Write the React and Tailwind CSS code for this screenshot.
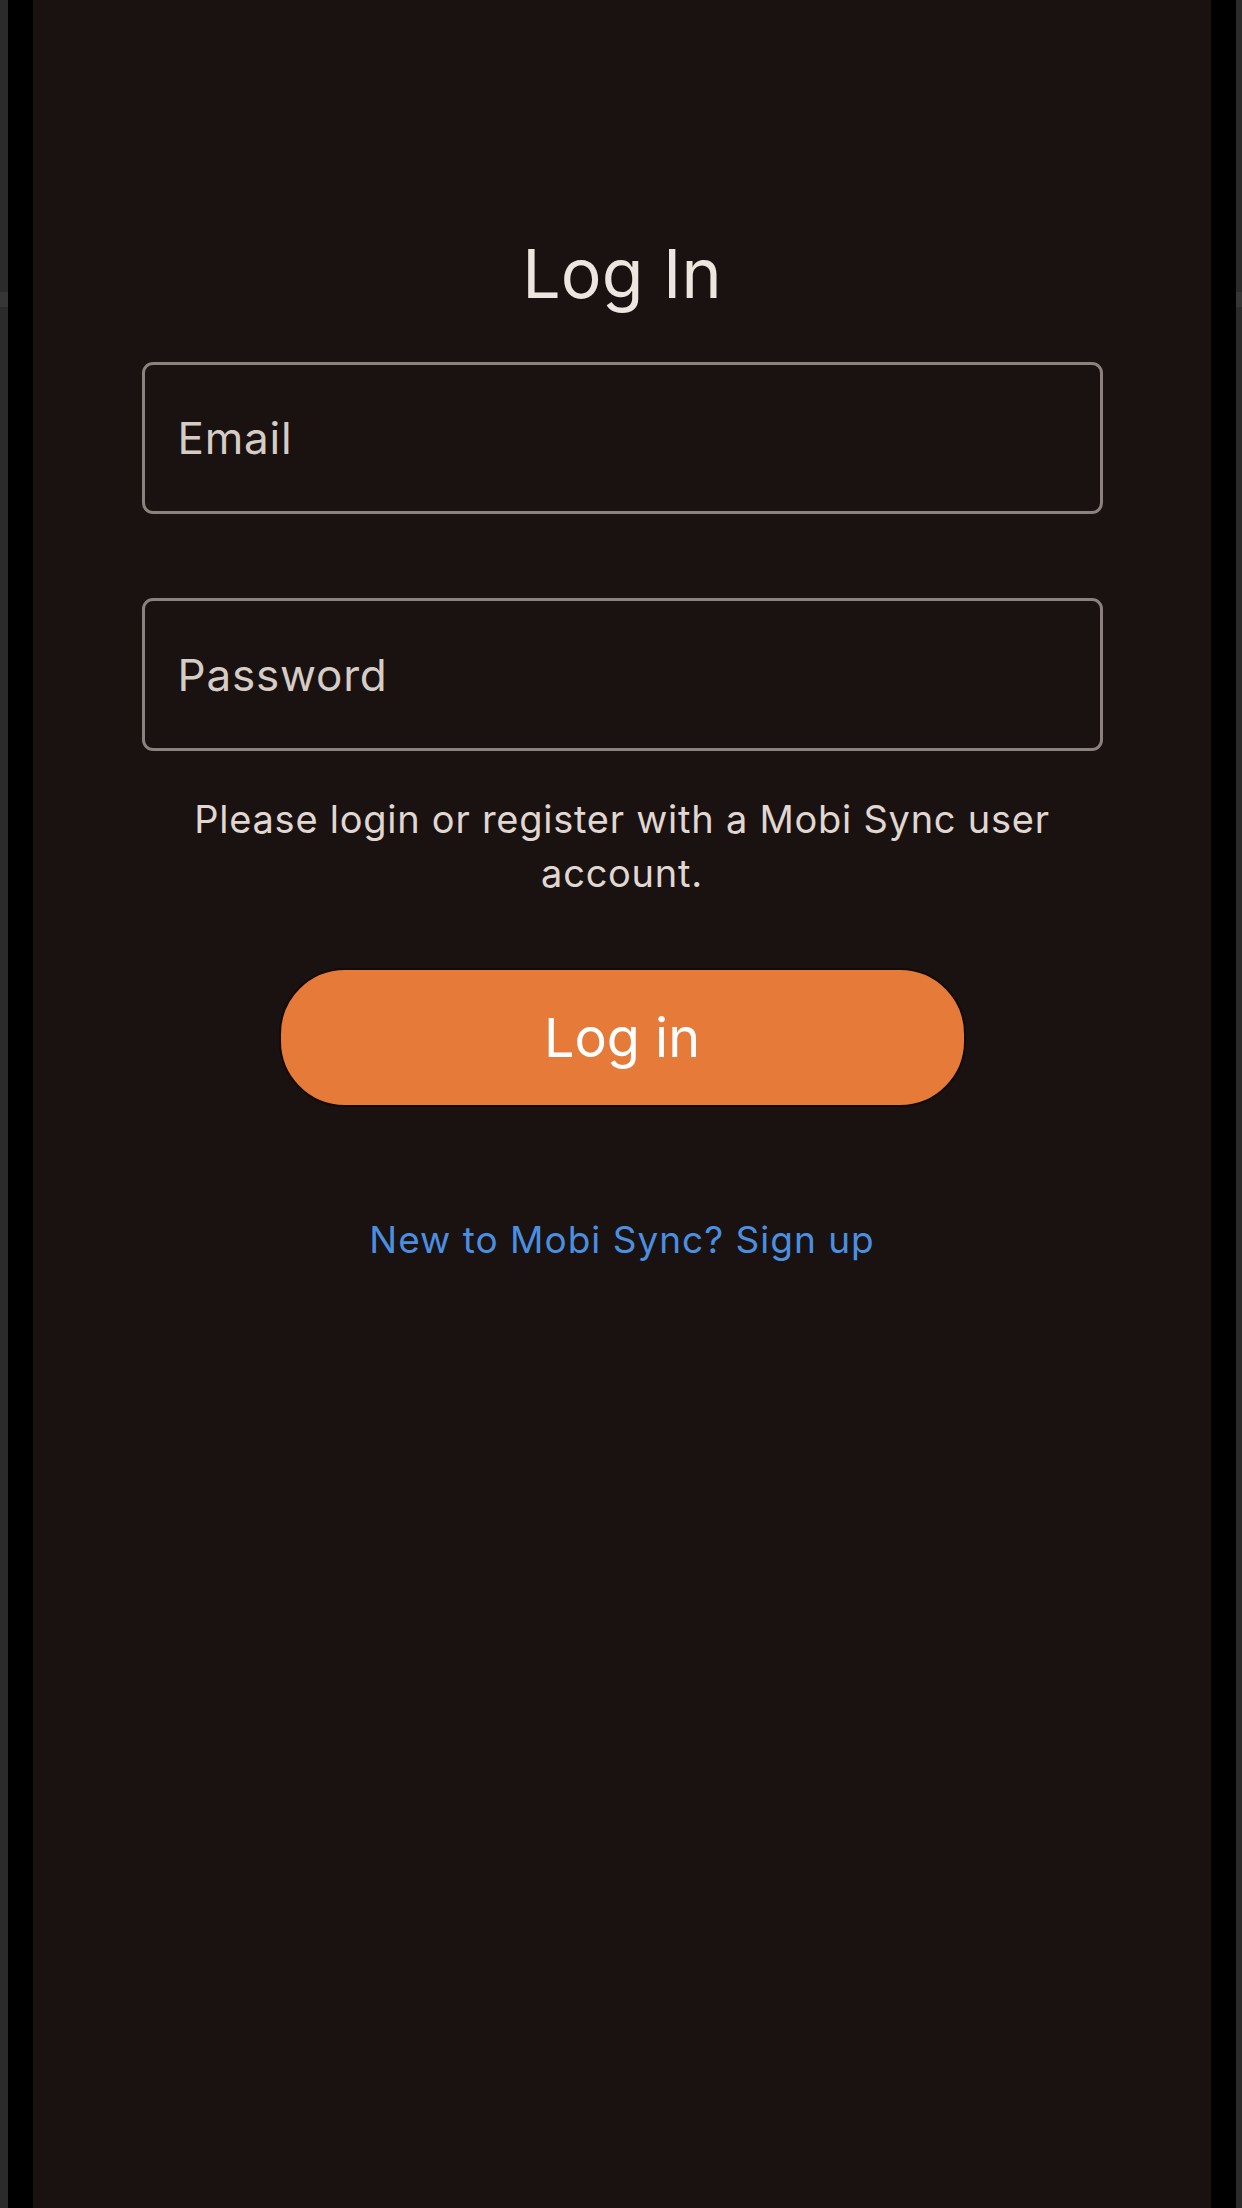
import { useState } from "react";

const App = () => {
  const [email, setEmail] = useState("");
  const [password, setPassword] = useState("");

  return (
    <div className="flex h-[2208px] w-full bg-[#2b2b2b] font-['Inter',sans-serif]">
      {/* device frame edges */}
      <div className="w-[8px] flex flex-col">
        <div className="h-[292px]" />
        <div className="h-[15px] bg-[#363636]" />
      </div>
      <div className="w-[25px] bg-black" />

      <main className="flex-1 bg-[#1a1210] flex flex-col items-center pt-[239px]">
        <h1 className="text-[68px] leading-none text-[#ede5e0] font-normal tracking-[0.2px]">
          Log In
        </h1>

        <input
          type="email"
          value={email}
          onChange={(e) => setEmail(e.target.value)}
          placeholder="Email"
          className="mt-[55px] w-[961px] h-[152px] rounded-[11px] border-[3px] border-[#8b827d] bg-transparent pl-[33px] text-[44px] tracking-[0.8px] text-[#e0d7d2] placeholder:text-[#d6ccc6] outline-none"
        />

        <input
          type="password"
          value={password}
          onChange={(e) => setPassword(e.target.value)}
          placeholder="Password"
          className="mt-[84px] w-[961px] h-[153px] rounded-[11px] border-[3px] border-[#8b827d] bg-transparent pl-[33px] text-[44px] tracking-[0.8px] text-[#e0d7d2] placeholder:text-[#d6ccc6] outline-none"
        />

        <p className="mt-[41px] w-[900px] text-center text-[38px] leading-[54px] tracking-[0.75px] text-[#e0d7d2]">
          Please login or register with a Mobi Sync user account.
        </p>

        <button className="mt-[68px] w-[687px] h-[139px] rounded-[66px] border-2 border-[#120b08] bg-[#e57a39] text-[54px] text-white">
          Log in
        </button>

        <a href="#" className="mt-[111px] text-[37px] leading-[1.2] tracking-[1px] text-[#4a8fe0]">
          New to Mobi Sync? Sign up
        </a>
      </main>

      <div className="w-[25px] bg-black" />
      <div className="w-[6px] flex flex-col">
        <div className="h-[292px]" />
        <div className="h-[15px] bg-[#363636]" />
      </div>
    </div>
  );
};

export default App;
